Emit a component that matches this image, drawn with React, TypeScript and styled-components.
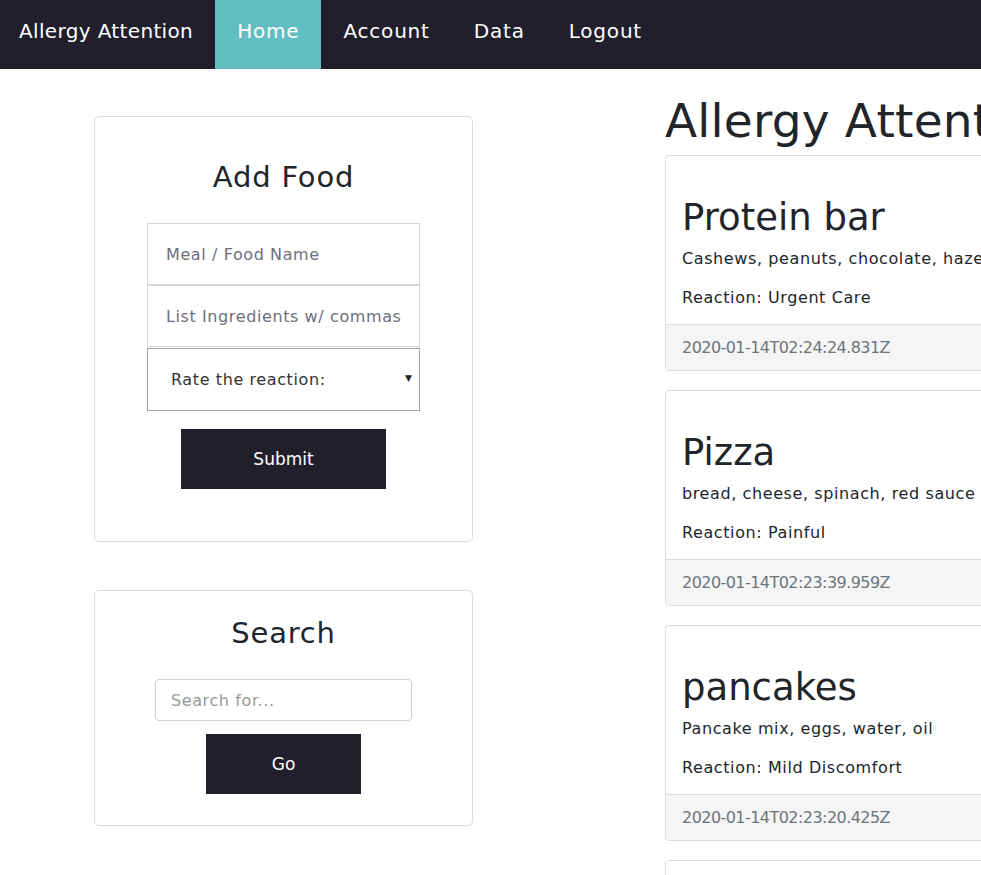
import React from "react";
import styled, { createGlobalStyle } from "styled-components";

const FONT = `"DejaVu Sans", "Open Sans", sans-serif`;

const GlobalStyle = createGlobalStyle`
  html, body { margin: 0; padding: 0; background: #fff; }
  body { font-family: ${FONT}; color: #212529; overflow: hidden; width: 981px; height: 875px; }
  * { box-sizing: border-box; }
`;

const NavBar = styled.nav`
  display: flex;
  height: 69px;
  background: #201f2b;
`;

const NavLink = styled.a<{ $active?: boolean; $brand?: boolean }>`
  display: block;
  padding: 0 22px 0 ${(p) => (p.$brand ? 19 : 22)}px;
  line-height: 63px;
  font-size: 20px;
  letter-spacing: ${(p) => (p.$brand ? 0.35 : 0.8)}px;
  color: #fff;
  text-decoration: none;
  background: ${(p) => (p.$active ? "#62bec1" : "transparent")};
`;

const Main = styled.div`
  display: flex;
  align-items: flex-start;
`;

const LeftCol = styled.div`
  margin-left: 94px;
  margin-top: 47px;
  width: 379px;
  display: flex;
  flex-direction: column;
  gap: 48px;
  flex-shrink: 0;
`;

const Panel = styled.div`
  border: 1px solid #dcdcdc;
  border-radius: 5px;
  display: flex;
  flex-direction: column;
  align-items: center;
`;

const PanelTitle = styled.h2<{ $top: number; $bottom: number }>`
  margin: ${(p) => p.$top}px 0 ${(p) => p.$bottom}px;
  font-size: 29px;
  font-weight: 400;
  letter-spacing: 0.8px;
  line-height: 36px;
  color: #212529;
`;

const FieldStack = styled.div`
  display: flex;
  flex-direction: column;
  width: 273px;
`;

const TextField = styled.input`
  height: 62px;
  border: 1px solid #d6d6d6;
  margin: 0;
  padding: 0 18px;
  font-family: ${FONT};
  font-size: 16px;
  letter-spacing: 0.6px;
  color: #495057;
  outline: none;
  &::placeholder { color: #6e6e78; }
`;

const SelectBox = styled.div`
  position: relative;
  height: 63px;
  margin-top: 1px;
  border: 1px solid #a5a5a5;
  display: flex;
  align-items: center;
  padding: 0 23px;
  font-size: 16px;
  letter-spacing: 0.6px;
  color: #333;
`;

const Caret = styled.span`
  position: absolute;
  right: 7px;
  top: 24px;
  font-size: 9px;
  letter-spacing: 0;
  color: #222;
`;

const DarkButton = styled.button<{ $w: number; $top: number; $bottom: number }>`
  width: ${(p) => p.$w}px;
  height: 60px;
  margin: ${(p) => p.$top}px 0 ${(p) => p.$bottom}px;
  background: #201f2b;
  color: #fff;
  border: none;
  font-family: ${FONT};
  font-size: 17px;
  font-weight: 500;
`;

const SearchField = styled.input`
  width: 257px;
  height: 42px;
  border: 1px solid #cfcfcf;
  border-radius: 4px;
  padding: 0 15px;
  font-family: ${FONT};
  font-size: 16px;
  letter-spacing: 0.6px;
  outline: none;
  &::placeholder { color: #999; }
`;

const RightCol = styled.div`
  margin-left: 192px;
  width: 520px;
  flex-shrink: 0;
`;

const PageTitle = styled.h1`
  margin: 24px 0 0;
  height: 62px;
  font-size: 47px;
  letter-spacing: 0.2px;
  font-weight: 400;
  line-height: 56px;
  color: #212529;
  white-space: nowrap;
`;

const CardList = styled.div`
  display: flex;
  flex-direction: column;
  gap: 19px;
`;

const Card = styled.div`
  border: 1px solid #dcdcdc;
  border-radius: 4px;
  overflow: hidden;
  height: 216px;
  display: flex;
  flex-direction: column;
`;

const CardBody = styled.div`
  flex: 1;
  padding: 39px 16px 0;
`;

const CardTitle = styled.h3`
  margin: 0 0 5px;
  font-size: 37px;
  font-weight: 400;
  line-height: 46px;
  color: #212529;
`;

const CardText = styled.p`
  margin: 0 0 13px;
  font-size: 16px;
  letter-spacing: 0.6px;
  line-height: 26px;
  color: #212529;
  white-space: nowrap;
`;

const CardFooter = styled.div`
  height: 46px;
  border-top: 1px solid #dcdcdc;
  background: #f5f5f5;
  padding: 0 16px;
  display: flex;
  align-items: center;
  font-size: 16px;
  letter-spacing: -0.55px;
  color: #6c757d;
`;

const foods = [
  { name: "Protein bar", ingredients: "Cashews, peanuts, chocolate, hazelnuts", reaction: "Urgent Care", ts: "2020-01-14T02:24:24.831Z" },
  { name: "Pizza", ingredients: "bread, cheese, spinach, red sauce", reaction: "Painful", ts: "2020-01-14T02:23:39.959Z" },
  { name: "pancakes", ingredients: "Pancake mix, eggs, water, oil", reaction: "Mild Discomfort", ts: "2020-01-14T02:23:20.425Z" },
  { name: "", ingredients: "", reaction: "", ts: "" },
];

export default function App() {
  return (
    <>
      <GlobalStyle />
      <NavBar>
        <NavLink href="#" $brand>Allergy Attention</NavLink>
        <NavLink href="#" $active>Home</NavLink>
        <NavLink href="#">Account</NavLink>
        <NavLink href="#">Data</NavLink>
        <NavLink href="#">Logout</NavLink>
      </NavBar>
      <Main>
        <LeftCol>
          <Panel>
            <PanelTitle $top={42} $bottom={28}>Add Food</PanelTitle>
            <FieldStack>
              <TextField placeholder="Meal / Food Name" />
              <TextField placeholder="List Ingredients w/ commas" />
              <SelectBox>
                Rate the reaction:
                <Caret>▼</Caret>
              </SelectBox>
            </FieldStack>
            <DarkButton $w={205} $top={18} $bottom={52}>Submit</DarkButton>
          </Panel>
          <Panel>
            <PanelTitle $top={24} $bottom={28}>Search</PanelTitle>
            <SearchField placeholder="Search for..." />
            <DarkButton $w={155} $top={13} $bottom={31}>Go</DarkButton>
          </Panel>
        </LeftCol>
        <RightCol>
          <PageTitle>Allergy Attention</PageTitle>
          <CardList>
            {foods.map((f, i) => (
              <Card key={i}>
                <CardBody>
                  <CardTitle>{f.name}</CardTitle>
                  <CardText>{f.ingredients}</CardText>
                  <CardText>{f.reaction ? `Reaction: ${f.reaction}` : ""}</CardText>
                </CardBody>
                <CardFooter>{f.ts}</CardFooter>
              </Card>
            ))}
          </CardList>
        </RightCol>
      </Main>
    </>
  );
}
